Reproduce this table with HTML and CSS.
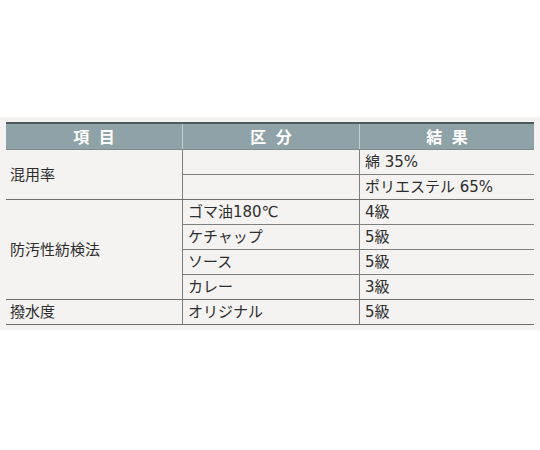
FILE: index.html
```html
<!DOCTYPE html>
<html lang="ja">
<head>
<meta charset="utf-8">
<link rel="stylesheet" href="styles.css">
</head>
<body>
<div class="panel">
<table class="spec">
<thead>
<tr><th class="c1">項 目</th><th class="c2">区 分</th><th class="c3">結 果</th></tr>
</thead>
<tbody>
<tr class="sub"><td rowspan="2" class="item">混用率</td><td></td><td>綿 35%</td></tr>
<tr class="grp"><td></td><td>ポリエステル 65%</td></tr>
<tr class="sub"><td rowspan="4" class="item">防汚性紡検法</td><td>ゴマ油180℃</td><td>4級</td></tr>
<tr class="sub"><td>ケチャップ</td><td>5級</td></tr>
<tr class="sub"><td>ソース</td><td>5級</td></tr>
<tr class="grp"><td>カレー</td><td>3級</td></tr>
<tr class="grp"><td class="item">撥水度</td><td>オリジナル</td><td>5級</td></tr>
</tbody>
</table>
</div>
</body>
</html>
```
FILE: styles.css
```css
html, body {
  margin: 0;
  padding: 0;
  background: #ffffff;
}
body {
  font-family: "DejaVu Sans", "Noto Sans CJK JP", sans-serif;
  color: #2e2e2e;
}
.panel {
  margin-top: 117px;
  background: #f4f3f1;
  padding: 5px 6px 5px 6px;
}
.spec {
  width: 100%;
  border-collapse: collapse;
  table-layout: fixed;
}
.spec th {
  background: #8fa2a7;
  color: #ffffff;
  font-family: "Noto Sans CJK JP", sans-serif;
  font-weight: bold;
  font-size: 16px;
  letter-spacing: 2px;
  text-indent: 2px;
  word-spacing: 2px;
  height: 25px;
  padding: 0;
  border-top: 2px solid #4d5a5e;
  border-bottom: 1px solid #7d8d91;
  border-left: 1px solid #c3cfd2;
  text-align: center;
  line-height: 25px;
}
.spec th:first-child {
  border-left: none;
}
.spec .c1 { width: 176px; }
.spec .c2 { width: 176px; }
.spec td {
  height: 24px;
  padding: 0 0 0 5px;
  font-size: 15px;
  line-height: 24px;
  border-left: 1px solid #7f7f7f;
  border-bottom: 1px solid #7f7f7f;
  white-space: nowrap;
  vertical-align: middle;
}
.spec td.item {
  border-left: none;
  padding-left: 4px;
  border-bottom: 1px solid #6f6f6f;
}
.spec tr.grp td {
  border-bottom: 1px solid #6f6f6f;
}
```
